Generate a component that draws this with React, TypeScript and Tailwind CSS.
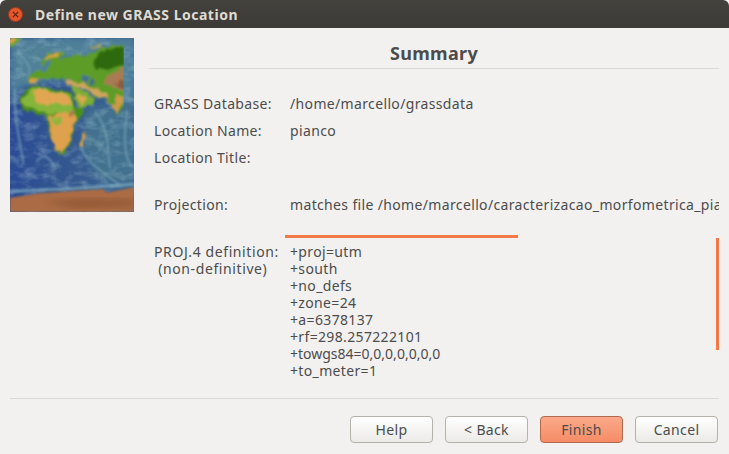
import React from 'react';

const summary = [
    { label: "GRASS Database:", value: "/home/marcello/grassdata", h: "h-[27px]" },
    { label: "Location Name:", value: "pianco", h: "h-[27px]" },
    { label: "Location Title:", value: "", h: "h-[47px]" },
    { label: "Projection:", value: "matches file /home/marcello/caracterizacao_morfometrica_pianco/dados/pianco.tif", h: "h-[27px]" },
];

const proj = ["+proj=utm", "+south", "+no_defs", "+zone=24", "+a=6378137", "+rf=298.257222101", "+towgs84=0,0,0,0,0,0,0", "+to_meter=1"];

const buttons = ["Help", "< Back", "Finish", "Cancel"];

function WorldMap() {
    return (
        <svg viewBox="30 24 372 522" preserveAspectRatio="none" className="w-[124px] h-[174px] shrink-0 block">
            <defs>
                <linearGradient id="ocean" x1="0" y1="0" x2="1" y2="0">
                    <stop offset="0" stopColor="#2b4b94" />
                    <stop offset="0.45" stopColor="#33578f" />
                    <stop offset="1" stopColor="#3d6690" />
                </linearGradient>
                <filter id="land" x="0" y="0" width="100%" height="100%" filterUnits="userSpaceOnUse" primitiveUnits="userSpaceOnUse">
                    <feTurbulence type="fractalNoise" baseFrequency="0.045" numOctaves="3" seed="3" result="n" />
                    <feDisplacementMap in="SourceGraphic" in2="n" scale="22" xChannelSelector="R" yChannelSelector="G" />
                    <feGaussianBlur stdDeviation="2.6" />
                </filter>
                <filter id="wide"><feGaussianBlur stdDeviation="9" /></filter>
                <filter id="ridge"><feGaussianBlur stdDeviation="3" /></filter>
                <filter id="relief" x="0" y="0" width="100%" height="100%">
                    <feTurbulence type="fractalNoise" baseFrequency="0.028 0.04" numOctaves="3" seed="11" />
                    <feColorMatrix values="0 0 0 0 0.45  0 0 0 0 0.64  0 0 0 0 0.72  1.7 0 0 0 -0.74" />
                    <feGaussianBlur stdDeviation="1.5" />
                </filter>
            </defs>
            <rect x="30" y="24" width="372" height="522" fill="url(#ocean)" />
            <path fill="#4f8098" filter="url(#wide)" d="M30 24 H402 V230 L300 190 L180 150 L60 175 L30 230 Z" />
            <path fill="#42718f" filter="url(#wide)" d="M260 240 L402 220 L402 460 L300 450 L245 350 Z" />
            <rect x="30" y="24" width="372" height="522" filter="url(#relief)" opacity="0.45" />
            <g fill="none" stroke="#78a4b8" strokeWidth="7" opacity="0.6" filter="url(#ridge)">
                <path d="M52 60 C70 90 100 105 85 140" />
                <path d="M45 175 C40 260 60 330 70 400" />
                <path d="M240 345 C260 400 300 420 360 465" />
                <path d="M285 245 C330 300 322 360 330 415" />
                <path d="M382 240 C375 300 365 370 395 410" />
                <path d="M110 395 C130 365 150 385 165 412" />
                <path d="M30 485 C150 478 270 476 402 462" stroke="#8bbac6" strokeWidth="9" />
            </g>
            <g filter="url(#land)">
                {/* Europa y Asia */}
                <path fill="#5d9c27" d="M82 150 L100 128 L128 118 L118 95 L150 72 L195 62 L175 92 L215 78 L285 68 L310 52 L402 48 L402 125 L395 195 L378 225 L352 252 L322 205 L285 200 L250 170 L205 150 L178 148 L138 148 L108 142 L88 162 Z" />
                <path fill="#2f6a10" d="M290 75 L320 56 L402 54 L375 100 L345 112 L288 120 L280 100 Z" />
                <path fill="#d9a24c" d="M135 85 L170 70 L188 66 L160 82 L145 92 Z" />
                <path fill="#4d7f96" d="M132 98 L152 92 L148 110 L135 122 L124 116 Z" />
                <path fill="#c2a14f" d="M376 60 L402 58 L402 100 L385 98 Z" />
                <path fill="#456f93" d="M150 148 L178 150 L172 160 L150 158 Z" />
                <path fill="#456f93" d="M244 136 L264 138 L264 160 L250 160 Z" />
                <path fill="#3d6690" d="M272 142 L284 146 L282 165 L272 160 Z" />
                <path fill="#a97a52" d="M318 140 L360 118 L402 108 L402 186 L350 178 L312 155 Z" />
                <path fill="#8a5c40" d="M335 160 L402 150 L402 178 L360 172 Z" />
                <path fill="#cfa55c" d="M195 152 L245 160 L280 172 L320 190 L322 205 L290 198 L255 178 L200 165 Z" />
                <path fill="#d8a04a" d="M85 150 L110 142 L110 160 L90 164 Z" />
                <path fill="#cf9a4a" d="M320 200 L378 195 L356 240 L350 250 Z" />
                <path fill="#5d9c27" d="M322 196 L350 200 L345 225 L335 226 Z" />
                {/* Arabia */}
                <path fill="#7cae36" d="M216 165 L250 182 L285 208 L272 226 L242 240 L224 205 Z" />
                <path fill="#dba850" d="M232 188 L262 205 L246 228 L232 205 Z" />
                {/* Africa */}
                <path fill="#4a8f1c" d="M60 205 L85 172 L120 165 L170 184 L210 185 L226 235 L254 235 L220 290 L214 340 L180 378 L158 338 L140 262 L100 247 L64 238 Z" />
                <path fill="#86b53a" d="M66 208 L95 176 L125 170 L165 188 L205 190 L220 238 L212 262 L150 250 L100 238 L72 232 Z" />
                <path fill="#e2a652" d="M98 186 L122 174 L160 192 L202 196 L212 228 L186 224 L170 212 L140 228 L112 218 Z" />
                <path fill="#e0a14e" d="M146 258 L205 246 L232 260 L214 296 L210 335 L180 372 L158 335 Z" />
                <path fill="#8fb63e" d="M152 262 L190 262 L185 285 L160 285 Z" />
                <path fill="#b0784e" d="M210 240 L226 238 L218 262 L206 258 Z" />
                {/* Madagascar */}
                <path fill="#d9a24c" d="M250 310 L258 312 L250 348 L240 345 Z" />
                {/* Groenlandia e islas */}
                <path fill="#6ea335" d="M30 24 L72 24 L50 42 L30 52 Z" />
                <path fill="#d9a24c" d="M30 26 L52 28 L30 42 Z" />
                <path fill="#c2a14f" d="M268 55 L305 42 L296 52 L272 60 Z" />
            </g>
            {/* Antartida */}
            <path fill="#ab6c44" filter="url(#ridge)" d="M30 503 L120 490 L230 482 L310 478 L320 488 L402 472 L402 546 L30 546 Z" />
            <path fill="#8a5230" opacity="0.7" filter="url(#wide)" d="M130 515 L260 505 L402 510 L402 530 L220 535 Z" />
        </svg>
    );
}

export default function App() {
    return (
        <div className="relative w-[729px] h-[454px] overflow-hidden bg-[#f2f1f0] text-[#4c4c4c] text-[14px] tracking-[0.35px] flex flex-col" style={{ fontFamily: '"Noto Sans", sans-serif' }}>
            {/* Barra de titulo */}
            <div className="h-[28px] shrink-0 flex items-center pl-[8px] bg-gradient-to-b from-[#44423d] to-[#3b3a36] rounded-t-[6px]">
                <div className="w-[15px] h-[15px] rounded-full bg-[#e4572a] border border-[#9c3a1c] flex items-center justify-center">
                    <svg viewBox="0 0 8 8" className="w-[7px] h-[7px]">
                        <path d="M1 1 L7 7 M7 1 L1 7" stroke="#5a2010" strokeWidth="1.3" />
                    </svg>
                </div>
                <span className="ml-[12px] font-bold text-[14px] tracking-[0.5px] text-[#dfdbd2]">Define new GRASS Location</span>
            </div>

            <div className="flex-1 flex pt-[10px] pl-[10px] pr-[10px] min-h-0">
                <WorldMap />
                <div className="flex-1 min-w-0 ml-[15px] overflow-hidden">
                    <h1 className="h-[31px] border-b border-[#dcdad5] flex items-center justify-center text-[18px] font-bold leading-none tracking-[0.3px]">Summary</h1>
                    <div className="mt-[21px] pl-[5px]">
                        {summary.map((row) => (
                            <div key={row.label} className={`flex ${row.h} leading-[27px] whitespace-nowrap`}>
                                <span className="w-[136px] shrink-0">{row.label}</span>
                                <span>{row.value}</span>
                            </div>
                        ))}
                    </div>
                    <div className="flex mt-[25px] pl-[5px] leading-[17px]">
                        <div className="w-[136px] shrink-0 tracking-[0.6px]">
                            PROJ.4 definition:<br />&nbsp;(non-definitive)
                        </div>
                        <div>
                            {proj.map((line) => (
                                <div key={line} className={line.startsWith("+towgs84") ? "tracking-[0px]" : ""}>{line}</div>
                            ))}
                        </div>
                    </div>
                </div>
            </div>

            {/* Botones */}
            <div className="mx-[10px] h-[56px] shrink-0 border-t border-[#dcdad5] flex items-start justify-end gap-[12px] pt-[17px] pr-[1px]">
                {buttons.map((b) => (
                    <button key={b} className={`w-[83px] h-[27px] rounded-[4px] border text-[14px] leading-none ${b === "Finish" ? "border-[#b0694c] bg-gradient-to-b from-[#fba98a] to-[#f58c66]" : "border-[#b5b2ac] bg-gradient-to-b from-[#ffffff] to-[#ebeae7]"}`}>
                        {b}
                    </button>
                ))}
            </div>

            {/* Marcas sobre la captura */}
            <div className="absolute left-[285px] top-[235px] w-[233px] h-[3px] bg-[#f37a48]" />
            <div className="absolute left-[716px] top-[238px] w-[3px] h-[112px] bg-[#f37a48]" />
        </div>
    );
}
